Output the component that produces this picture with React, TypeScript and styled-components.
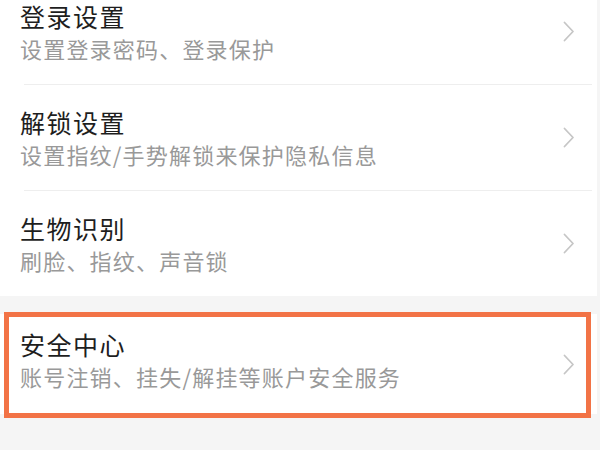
import React from "react";
import styled, { createGlobalStyle } from "styled-components";

const Global = createGlobalStyle`
  html, body {
    margin: 0;
    padding: 0;
    background: #f5f5f5;
    overflow: hidden;
  }
  body {
    font-family: "Noto Sans CJK SC", "Noto Sans", sans-serif;
  }
`;

const Page = styled.div`
  width: 600px;
  height: 450px;
  background: #f5f5f5;
  overflow: hidden;
`;

const Section = styled.div<{ $shift?: number }>`
  background: #ffffff;
  margin-right: 3px;
  margin-top: ${(p) => p.$shift ?? 0}px;
`;

const Row = styled.div<{ $h: number }>`
  display: flex;
  align-items: center;
  height: ${(p) => p.$h}px;
  box-sizing: border-box;
  padding: 0 22px 0 20px;
`;

const Texts = styled.div<{ $pt: number }>`
  flex: 1;
  display: flex;
  flex-direction: column;
  align-self: flex-start;
  padding-top: ${(p) => p.$pt}px;
`;

const Title = styled.div`
  font-size: 25px;
  line-height: 32px;
  letter-spacing: 1.5px;
  color: #1e1e1e;
  white-space: nowrap;
`;

const Subtitle = styled.div`
  font-size: 22px;
  line-height: 28px;
  letter-spacing: 1.2px;
  color: #999999;
  margin-top: 2px;
  white-space: nowrap;
`;

const Divider = styled.div`
  height: 1px;
  background: #eeeeee;
  margin: 0 5px 0 24px;
`;

const Card = styled.div`
  position: relative;
  margin-top: 18px;
  margin-right: 3px;
  background: #ffffff;
  &::after {
    content: "";
    position: absolute;
    top: -2px;
    left: 4px;
    right: 6px;
    bottom: -4px;
    border: 5px solid #f27346;
    pointer-events: none;
  }
`;

const Chevron = () => (
  <svg width="12" height="21" viewBox="0 0 12 21" fill="none">
    <path d="M1.5 1.5 L10 10.5 L1.5 19.5" stroke="#c6c6c6" strokeWidth="1.8" strokeLinecap="round" strokeLinejoin="round" />
  </svg>
);

type Item = { title: string; sub: string };

const items: Item[] = [
  { title: "登录设置", sub: "设置登录密码、登录保护" },
  { title: "解锁设置", sub: "设置指纹/手势解锁来保护隐私信息" },
  { title: "生物识别", sub: "刷脸、指纹、声音锁" },
];

const Entry = ({ item, h, pt }: { item: Item; h: number; pt: number }) => (
  <Row $h={h}>
    <Texts $pt={pt}>
      <Title>{item.title}</Title>
      <Subtitle>{item.sub}</Subtitle>
    </Texts>
    <Chevron />
  </Row>
);

export default function App() {
  return (
    <>
      <Global />
      <Page>
        <Section $shift={-21}>
          {items.map((it, i) => (
            <React.Fragment key={it.title}>
              <Entry item={it} h={105} pt={21} />
              {i < items.length - 1 && <Divider />}
            </React.Fragment>
          ))}
        </Section>
        <Card>
          <Entry item={{ title: "安全中心", sub: "账号注销、挂失/解挂等账户安全服务" }} h={100} pt={14} />
        </Card>
      </Page>
    </>
  );
}
